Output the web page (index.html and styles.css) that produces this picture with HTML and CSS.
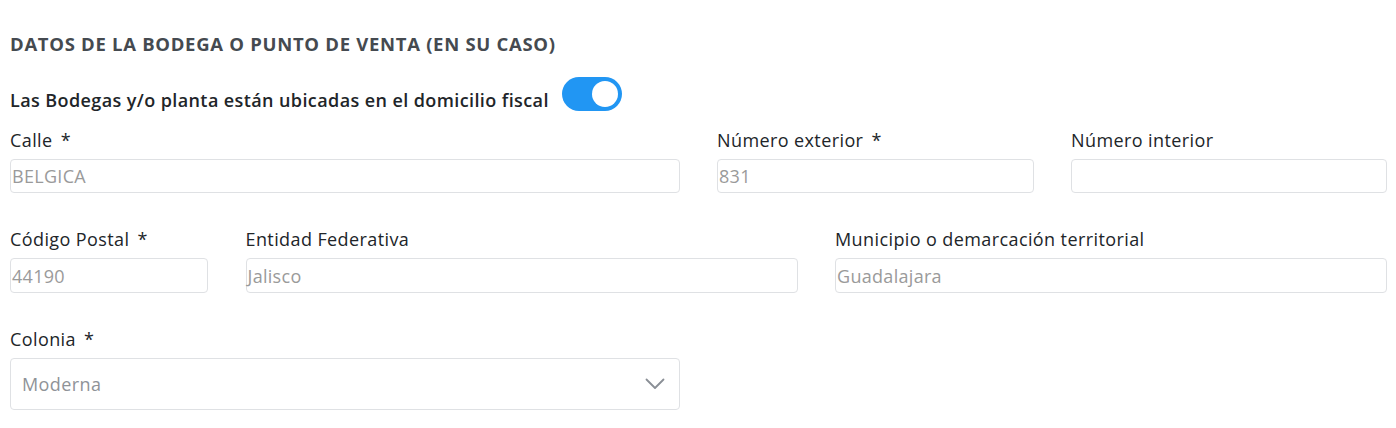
FILE: index.html
```html
<!DOCTYPE html>
<html lang="es">
<head>
<meta charset="utf-8">
<link rel="stylesheet" href="styles.css">
</head>
<body>
<div class="page">
  <h2 class="section-title">DATOS DE LA BODEGA O PUNTO DE VENTA (EN SU CASO)</h2>
  <div class="switch-row">
    <span class="switch-label">Las Bodegas y/o planta están ubicadas en el domicilio fiscal</span>
    <span class="switch on"><span class="knob"></span></span>
  </div>
  <div class="row row-a">
    <div class="field"><label>Calle <span class="req">*</span></label><div class="input">BELGICA</div></div>
    <div class="field"><label>Número exterior <span class="req">*</span></label><div class="input">831</div></div>
    <div class="field"><label>Número interior</label><div class="input"></div></div>
  </div>
  <div class="row row-b">
    <div class="field"><label>Código Postal <span class="req">*</span></label><div class="input">44190</div></div>
    <div class="field"><label>Entidad Federativa</label><div class="input">Jalisco</div></div>
    <div class="field"><label>Municipio o demarcación territorial</label><div class="input">Guadalajara</div></div>
  </div>
  <div class="row row-c">
    <div class="field"><label>Colonia <span class="req">*</span></label>
      <div class="select"><span>Moderna</span>
        <svg class="chev" width="20" height="12" viewBox="0 0 20 12"><path d="M1.5 1.5 L10 10 L18.5 1.5" fill="none" stroke="#8a8f96" stroke-width="1.8" stroke-linecap="round" stroke-linejoin="round"/></svg>
      </div>
    </div>
  </div>
</div>
</body>
</html>
```
FILE: styles.css
```css
html, body { margin: 0; padding: 0; background: #fff; }
body { font-family: "Open Sans", "Noto Sans", sans-serif; color: #212529; }
.page { padding: 32px 9px 0 10px; }
.section-title { margin: 0; font-size: 18.5px; line-height: 24px; font-weight: 700; color: #454a50; letter-spacing: 0.7px; }
.switch-row { display: flex; align-items: flex-end; gap: 13px; margin-top: 21px; }
.switch-label { font-size: 18px; font-weight: 600; line-height: 22px; color: #212529; letter-spacing: 0.4px; }
.switch { width: 60px; height: 34px; border-radius: 17px; background: #2196f3; display: flex; align-items: center; justify-content: flex-end; padding: 0 4px; box-sizing: border-box; }
.knob { width: 26px; height: 26px; border-radius: 50%; background: #fff; }
.row { display: grid; column-gap: 37px; }
.row-a { grid-template-columns: 670px 317px 316px; margin-top: 17px; }
.row-b { grid-template-columns: 198px 552px 552px; column-gap: 37.5px; margin-top: 34px; }
.row-b .input { height: 35px; }
.row-c { grid-template-columns: 670px; margin-top: 34px; }
.field label { display: block; font-size: 18px; line-height: 24px; margin-bottom: 7px; color: #212529; letter-spacing: 0.4px; }
.req { margin-left: 3px; }
.input { height: 34px; box-sizing: border-box; border: 1px solid #dfe1e4; border-radius: 4px; padding: 0 0 0 1px; display: flex; align-items: center; font-size: 18px; color: #9a9a9a; letter-spacing: 0.3px; }
.select { height: 52px; box-sizing: border-box; border: 1px solid #dfe1e4; border-radius: 4px; padding: 0 14px 0 11px; display: flex; align-items: center; justify-content: space-between; font-size: 18px; color: #8f9398; letter-spacing: 0.4px; }
.chev { display: block; }
```
